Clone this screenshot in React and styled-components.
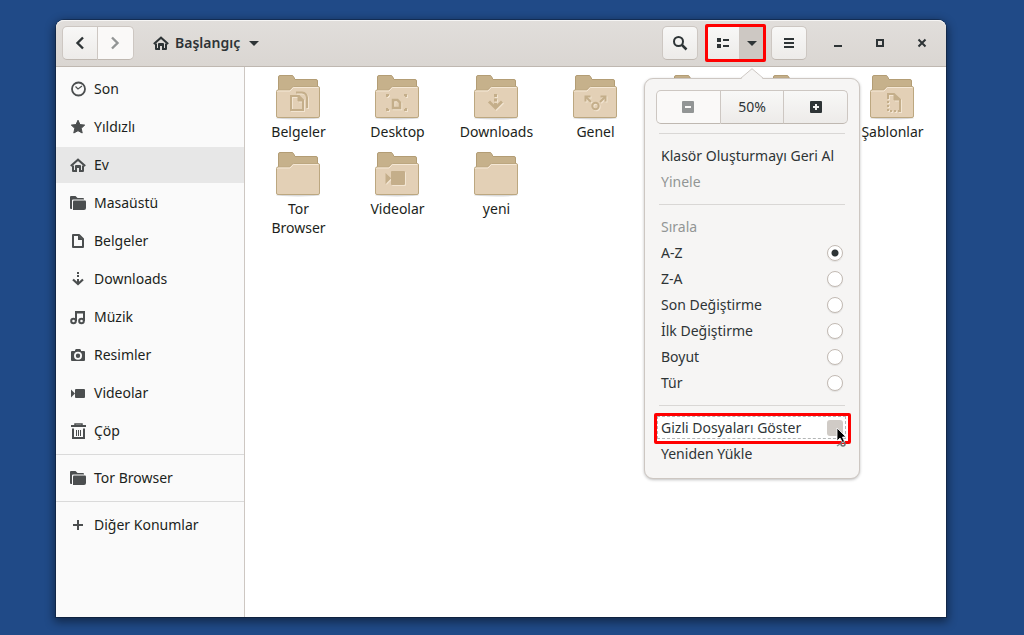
import React from "react";
import styled, { createGlobalStyle, css } from "styled-components";

const GlobalStyle = createGlobalStyle`
  *, *::before, *::after { box-sizing: border-box; }
  body {
    margin: 0;
    background: #204a87;
    color: #1c1f20;
    font-family: "Noto Sans", "Open Sans", sans-serif;
    font-size: 14px;
    line-height: 18px;
  }
  button, input { font: inherit; color: inherit; margin: 0; padding: 0; }
`;

const Desktop = styled.div`
  display: flex;
  min-height: 100vh;
  padding: 20px 78px 18px 56px;
`;

const Window = styled.div`
  flex: 1;
  min-width: 0;
  display: flex;
  flex-direction: column;
  background: #fff;
  border-radius: 8px 8px 0 0;
  box-shadow: 0 0 0 1px rgba(0, 0, 0, 0.25), 0 3px 10px 2px rgba(0, 0, 0, 0.45);
`;

const HeaderBar = styled.header`
  display: flex;
  align-items: center;
  height: 47px;
  padding: 0 12px 0 6px;
  border-bottom: 1px solid #bfb8b1;
  border-radius: 8px 8px 0 0;
  background: linear-gradient(#e1dedb, #dad6d2);
  box-shadow: inset 0 1px #f6f5f4;
  color: #2e3436;
`;

const Group = styled.div`
  position: relative;
  display: flex;
  border-radius: 5px;
`;

const HeaderButton = styled.button`
  display: flex;
  align-items: center;
  justify-content: center;
  width: ${(p) => p.$width || 36}px;
  height: 34px;
  border: 1px solid #cdc7c2;
  border-bottom-color: #bfb8b1;
  border-radius: 5px;
  background: linear-gradient(#f8f8f7, #edebe9);
  color: #2e3436;
  &:disabled { background: #faf9f8; color: #929595; }
  ${Group} > &:not(:first-child) {
    border-left: 0;
    border-top-left-radius: 0;
    border-bottom-left-radius: 0;
  }
  ${Group} > &:first-child {
    border-top-right-radius: 0;
    border-bottom-right-radius: 0;
  }
`;

const MenuAnchor = styled.div`
  position: relative;
`;

const MenuToggle = styled(HeaderButton)`
  border-left: 0;
  border-radius: 0 5px 5px 0;
  background: #cdc8c3;
`;

const Marker = styled.span`
  position: absolute;
  inset: ${(p) => p.$inset};
  border: 3px solid #f00;
  border-radius: 2px;
  pointer-events: none;
`;

const PathButton = styled.button`
  display: flex;
  align-items: center;
  gap: 6px;
  margin-left: 19px;
  border: 0;
  background: none;
  font-weight: 600;
`;

const HeaderTools = styled.div`
  display: flex;
  align-items: center;
  gap: 6px;
  margin-left: auto;
`;

const ToolSlot = styled.div`
  display: flex;
  margin-left: 2px;
`;

const WindowControls = styled.div`
  display: flex;
  gap: 18px;
  margin-left: 13px;
`;

const WindowButton = styled.button`
  display: flex;
  align-items: center;
  justify-content: center;
  width: 24px;
  height: 24px;
  border: 0;
  background: none;
`;

const Body = styled.div`
  flex: 1;
  display: flex;
`;

const Sidebar = styled.nav`
  width: 189px;
  flex-shrink: 0;
  border-right: 1px solid #cdc7c2;
  background: #fafafa;
`;

const PlaceList = styled.ul`
  display: flex;
  flex-direction: column;
  gap: 2px;
  list-style: none;
  margin: 0;
  padding: 4px 0 0;
`;

const PlaceRule = styled.li`
  height: 1px;
  margin: 3px 0;
  background: #dadada;
`;

const PlaceLink = styled.a`
  display: flex;
  align-items: center;
  gap: 8px;
  height: 36px;
  padding: 0 14px;
  color: #1c1f20;
  text-decoration: none;
  background: ${(p) => (p.$current ? "#e7e7e7" : "transparent")};
  svg { color: #4b4e4f; }
`;

const FileGrid = styled.main`
  flex: 1;
  display: grid;
  grid-template-columns: repeat(auto-fill, minmax(99px, 1fr));
  align-content: start;
  gap: 10px 0;
  padding: 7px 4px;
`;

const FileItem = styled.div`
  display: flex;
  flex-direction: column;
  align-items: center;
  text-align: center;
`;

const FileName = styled.span`
  max-width: 76px;
  line-height: 19px;
`;

const Popover = styled.div`
  position: absolute;
  z-index: 2;
  top: 52px;
  left: -96px;
  width: 216px;
  padding: 11px;
  border: 1px solid #cdc7c2;
  border-radius: 9px;
  background: #f6f5f4;
  box-shadow: 0 1px 3px rgba(0, 0, 0, 0.25);
  color: #2e3436;
`;

const PopoverArrow = styled.svg`
  position: absolute;
  top: -11px;
  left: 50%;
  margin-left: -12px;
`;

const ZoomRow = styled.div`
  display: flex;
  height: 34px;
`;

const ZoomButton = styled.button`
  flex: 1;
  display: flex;
  align-items: center;
  justify-content: center;
  border: 1px solid #cdc7c2;
  border-bottom-color: #bfb8b1;
  background: linear-gradient(#f8f8f7, #edebe9);
  &:disabled { background: #faf9f8; color: #929595; }
  &:first-child { border-radius: 5px 0 0 5px; }
  &:last-child { border-radius: 0 5px 5px 0; }
  &:not(:first-child) { border-left: 0; }
`;

const MenuRule = styled.hr`
  height: 1px;
  margin: 9px 3px;
  border: 0;
  background: #d9d7d5;
`;

const rowStyle = css`
  display: flex;
  align-items: center;
  justify-content: space-between;
  width: 100%;
  height: 26px;
  padding: 0 5px;
  border: 0;
  background: none;
  text-align: left;
`;

const MenuAction = styled.button`
  ${rowStyle}
  &:disabled { color: #929595; }
`;

const MenuHeading = styled.div`
  ${rowStyle}
  color: #929595;
`;

const MenuOption = styled.label`
  ${rowStyle}
  position: relative;
`;

const CheckOption = styled(MenuOption)`
  background: #fff;
  &::before {
    content: "";
    position: absolute;
    inset: 1px 2px 2px 1px;
    border: 1px dashed #b4b6b6;
  }
`;

const Radio = styled.input`
  appearance: none;
  width: 16px;
  height: 16px;
  border: 1px solid #c2bab3;
  border-radius: 50%;
  background: #fff;
  box-shadow: 0 1px 1px rgba(0, 0, 0, 0.08);
  &:checked { background: radial-gradient(circle, #2e3436 0 3px, #fff 4px); }
`;

const Checkbox = styled.input`
  appearance: none;
  width: 16px;
  height: 16px;
  border-radius: 3px;
  background: #d0cbc6;
`;

const Pointer = styled.svg`
  position: absolute;
  right: 0;
  top: 12px;
  z-index: 3;
`;

function Icon({ children, size = 16 }) {
  return (
    <svg width={size} height={size} viewBox="0 0 16 16" fill="none" stroke="currentColor" strokeWidth="2" aria-hidden="true">
      {children}
    </svg>
  );
}

const solid = { fill: "currentColor", stroke: "none" };

const icons = {
  back: <path d="M11 2.500 5.500 8 11 13.500" strokeWidth="2.400" />,
  forward: <path d="M4 2.500 9.500 8 4 13.500" strokeWidth="2.400" />,
  home: (
    <>
      <path d="M.8 9 8 2.700 15.200 9" />
      <path {...solid} d="M2 8.500V14q0 1 1 1h4v-4h2v4h4q1 0 1-1V8.500h-2V13h-1V9q0-1-1-1H6Q5 8 5 9v4H4V8.500z" />
    </>
  ),
  clock: (
    <>
      <circle cx="8.500" cy="8" r="6.500" strokeWidth="1.800" />
      <path d="M5.500 5.500 8 8l4-3" strokeWidth="1.200" />
    </>
  ),
  star: <path {...solid} stroke="currentColor" strokeWidth="1" strokeLinejoin="round" d="M8 1.200 10 5.600l4.700.5-3.500 3.200 1 4.700L8 11.700 3.800 14l1-4.700L1.300 6.100 6 5.600z" />,
  folder: (
    <>
      <path {...solid} d="M0 2q0-1 1-1h4.500l2 2H13q1 0 1 1v.5H3Q2 4.500 2 5.500V14H1q-1 0-1-1z" />
      <path {...solid} d="M3 6.500q0-1 1-1h11q1 0 1 1V13q0 2-2 2H3z" />
    </>
  ),
  document: (
    <>
      <path d="M3 2h6l4 4v8H3z" strokeLinejoin="round" />
      <path {...solid} d="M8 2v5h5z" />
    </>
  ),
  download: (
    <>
      <path d="M8 1v2M8 4v2M8 8v5" />
      <path d="M3 8.500 8 13l5-4.500" strokeWidth="2.200" />
    </>
  ),
  music: (
    <>
      <circle cx="3.500" cy="12" r="2.300" />
      <circle cx="11.500" cy="12" r="2.300" />
      <path d="M6 12V3h8v9" />
      <path d="M6 3.500h8" />
    </>
  ),
  camera: (
    <path {...solid} fillRule="evenodd" d="M5 3l1-1h4l1 1v1h3q1 0 1 1v8q0 1-1 1H2q-1 0-1-1V5q0-1 1-1h3zM8 4.800a4 4 0 1 0 0 8 4 4 0 0 0 0-8zm0 1.800a2.200 2.200 0 1 1 0 4.400 2.200 2.200 0 0 1 0-4.400z" />
  ),
  video: (
    <>
      <rect {...solid} x="5" y="4" width="10" height="9" rx="1" />
      <path {...solid} d="M1 4.500 5 8.500l-4 4z" />
    </>
  ),
  trash: (
    <>
      <path d="M1 3h15" />
      <path d="M5 2.500V1h7v1.500" strokeWidth="1.500" />
      <path d="M3 5.500V15h11V5.500" />
      <path d="M6.500 7v6M8.500 7v6M10.500 7v6" strokeWidth="1" />
    </>
  ),
  plus: <path d="M8 3v10M3 8h10" />,
  search: (
    <>
      <circle cx="6.500" cy="6.500" r="4.500" />
      <path d="M10 10l4.500 4.500" strokeWidth="2.500" />
    </>
  ),
  list: (
    <>
      <path {...solid} d="M2 3h4v4H2zM2 9h4v4H2z" />
      <path d="M8 5h6M8 11h6" />
    </>
  ),
  caret: <path {...solid} d="M3 6h10L8 11z" />,
  menu: <path d="M3 4h10M3 8h10M3 12h10" />,
  minimize: <path d="M4 11h8" />,
  maximize: <path d="M5 5h6v6H5z" />,
  close: <path d="M4.500 4.500l7 7M11.500 4.500l-7 7" />,
  zoomOut: <path {...solid} fillRule="evenodd" d="M3 2h10q1 0 1 1v10q0 1-1 1H3q-1 0-1-1V3q0-1 1-1zM5 7v2h6V7z" />,
  zoomIn: <path {...solid} fillRule="evenodd" d="M3 2h10q1 0 1 1v10q0 1-1 1H3q-1 0-1-1V3q0-1 1-1zM7 5v2H5v2h2v2h2V9h2V7H9V5z" />,
};

const emblems = {
  documents: (
    <>
      <path d="M17 22h8l4 4v10H17z" />
      <path d="M24 22v5h5z" fill="currentColor" strokeWidth="1" />
      <path d="M22 18.500h6q4.500.5 5 5V34" />
    </>
  ),
  desktop: (
    <>
      <path d="M20 26h4.500l2.500 2.500V34h-7z" strokeWidth="2.500" />
      <path d="M14 23v-2h2M33 23v-2h-2M14 34v2h2M33 34v2h-2" />
    </>
  ),
  download: (
    <>
      <path d="M22 21.500h3M22 26h3" strokeWidth="3" />
      <path d="M17 27.500 23.500 34l6.500-6.500M23.500 29v4" strokeWidth="3" />
    </>
  ),
  share: (
    <>
      <circle cx="24.500" cy="32" r="3.200" />
      <path d="M20 28l-5-5M29 28l5-5" />
      <path d="M14.500 27.500V22.500h5M34.500 27.500V22.500h-5" />
    </>
  ),
  template: (
    <>
      <path d="M20 25v-5h6l6 5.500V38" />
      <path d="M26 20v6h6z" fill="currentColor" strokeWidth="1" />
      <path d="M20 27v11M22 37h9" strokeDasharray="2 2" />
    </>
  ),
  video: <path fill="currentColor" stroke="none" d="M19 20h12q1 0 1 1v12q0 1-1 1H19q-1 0-1-1v-5.500L12.500 33V22l5.500 5v-6q0-1 1-1z" />,
};

function FolderIcon({ emblem }) {
  return (
    <svg width="49" height="48" viewBox="0 0 49 48" aria-hidden="true">
      <ellipse cx="24" cy="44" rx="22" ry="1.500" fill="#000" opacity="0.150" />
      <path d="M4.500 20V3q0-1.500 1.500-1.500h12q1 0 1.500 1l1.500 3h21q1.500 0 1.500 1.500v15h-39z" fill="#c6b18b" stroke="#b39d75" />
      <path d="M2.500 17.500q0-1.500 1.500-1.500h11q1 0 1.500-.8l1.500-2q.5-.7 1.500-.7H44q1.500 0 1.500 1.500v28q0 1.500-1.500 1.500H4q-1.500 0-1.500-1.500z" fill="#e3d0b6" stroke="#bca780" />
      <path d="M3.500 18q0-1 1-1H16l3.500-3.500h25" fill="none" stroke="#f5e8d6" />
      {emblem && (
        <>
          <g fill="none" color="#f2e5d2" stroke="currentColor" strokeWidth="2" transform="translate(1 1)">{emblems[emblem]}</g>
          <g fill="none" color="#c4ae8a" stroke="currentColor" strokeWidth="2">{emblems[emblem]}</g>
        </>
      )}
    </svg>
  );
}

const places = [
  ["clock", "Son"],
  ["star", "Yıldızlı"],
  ["home", "Ev"],
  ["folder", "Masaüstü"],
  ["document", "Belgeler"],
  ["download", "Downloads"],
  ["music", "Müzik"],
  ["camera", "Resimler"],
  ["video", "Videolar"],
  ["trash", "Çöp"],
  null,
  ["folder", "Tor Browser"],
  null,
  ["plus", "Diğer Konumlar"],
];

const files = [
  ["Belgeler", "documents"],
  ["Desktop", "desktop"],
  ["Downloads", "download"],
  ["Genel", "share"],
  [""],
  [""],
  ["Şablonlar", "template"],
  ["Tor Browser"],
  ["Videolar", "video"],
  ["yeni"],
];

const sortOrders = ["A-Z", "Z-A", "Son Değiştirme", "İlk Değiştirme", "Boyut", "Tür"];

function ViewMenu() {
  return (
    <Popover>
      <PopoverArrow width="24" height="12" viewBox="0 0 24 12" aria-hidden="true">
        <path d="M0 12 12 .5 24 12" fill="#f6f5f4" />
        <path d="M0.500 10.500 12 .7l11.500 9.800" fill="none" stroke="#cdc7c2" />
      </PopoverArrow>
      <ZoomRow>
        <ZoomButton disabled aria-label="Uzaklaştır"><Icon>{icons.zoomOut}</Icon></ZoomButton>
        <ZoomButton>50%</ZoomButton>
        <ZoomButton aria-label="Yakınlaştır"><Icon>{icons.zoomIn}</Icon></ZoomButton>
      </ZoomRow>
      <MenuRule />
      <MenuAction>Klasör Oluşturmayı Geri Al</MenuAction>
      <MenuAction disabled>Yinele</MenuAction>
      <MenuRule />
      <MenuHeading>Sırala</MenuHeading>
      {sortOrders.map((label, i) => (
        <MenuOption key={label}>
          {label}
          <Radio type="radio" name="sort" defaultChecked={i === 0} />
        </MenuOption>
      ))}
      <MenuRule />
      <CheckOption>
        Gizli Dosyaları Göster
        <Checkbox type="checkbox" />
        <Marker $inset="-2px -3px -3px -2px" />
        <Pointer width="14" height="22" viewBox="0 0 14 22" aria-hidden="true">
          <path d="M3 19l3-2" stroke="#8a8d8d" strokeWidth="1.500" />
          <circle cx="9" cy="17" r="2" fill="none" stroke="#6d7071" strokeWidth="1.500" />
          <path d="M3 1v13l3-3 2.500 4.500 2-1L8.500 10H12z" fill="#000" stroke="#fff" strokeWidth=".8" />
        </Pointer>
      </CheckOption>
      <MenuAction>Yeniden Yükle</MenuAction>
    </Popover>
  );
}

export default function App() {
  return (
    <>
      <GlobalStyle />
      <Desktop>
        <Window>
          <HeaderBar>
            <Group>
              <HeaderButton aria-label="Geri"><Icon>{icons.back}</Icon></HeaderButton>
              <HeaderButton disabled aria-label="İleri"><Icon>{icons.forward}</Icon></HeaderButton>
            </Group>
            <PathButton>
              <Icon>{icons.home}</Icon>
              Başlangıç
              <Icon>{icons.caret}</Icon>
            </PathButton>
            <HeaderTools>
              <HeaderButton aria-label="Ara"><Icon>{icons.search}</Icon></HeaderButton>
              <ToolSlot>
                <Group>
                  <HeaderButton $width={34} aria-label="Liste görünümü"><Icon>{icons.list}</Icon></HeaderButton>
                  <MenuAnchor>
                    <MenuToggle $width={25} aria-label="Görünüm seçenekleri"><Icon>{icons.caret}</Icon></MenuToggle>
                    <ViewMenu />
                  </MenuAnchor>
                  <Marker $inset="-2px -1px" />
                </Group>
              </ToolSlot>
              <HeaderButton aria-label="Menü"><Icon>{icons.menu}</Icon></HeaderButton>
              <WindowControls>
                <WindowButton aria-label="Simge durumuna küçült"><Icon>{icons.minimize}</Icon></WindowButton>
                <WindowButton aria-label="Büyüt"><Icon>{icons.maximize}</Icon></WindowButton>
                <WindowButton aria-label="Kapat"><Icon>{icons.close}</Icon></WindowButton>
              </WindowControls>
            </HeaderTools>
          </HeaderBar>
          <Body>
            <Sidebar>
              <PlaceList>
                {places.map((place, i) =>
                  place ? (
                    <li key={place[1]}>
                      <PlaceLink href="#" $current={place[0] === "home"}>
                        <Icon>{icons[place[0]]}</Icon>
                        {place[1]}
                      </PlaceLink>
                    </li>
                  ) : (
                    <PlaceRule key={i} />
                  )
                )}
              </PlaceList>
            </Sidebar>
            <FileGrid>
              {files.map(([name, emblem], i) => (
                <FileItem key={i}>
                  <FolderIcon emblem={emblem} />
                  {name && <FileName>{name}</FileName>}
                </FileItem>
              ))}
            </FileGrid>
          </Body>
        </Window>
      </Desktop>
    </>
  );
}
